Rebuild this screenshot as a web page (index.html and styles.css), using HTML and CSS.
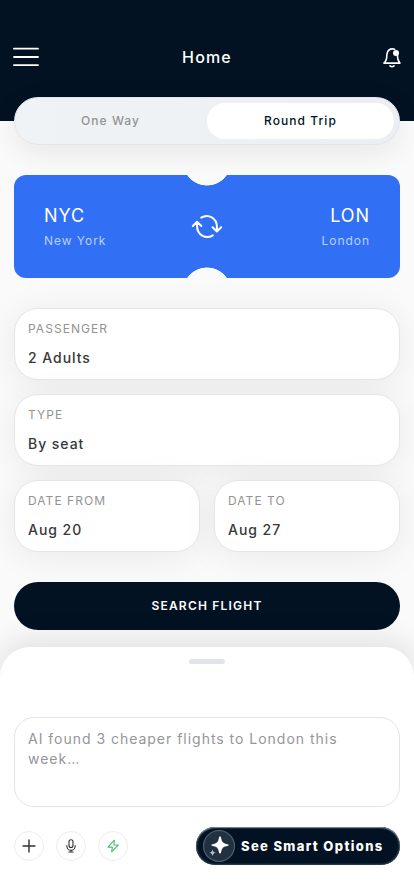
FILE: index.html
```html
<!DOCTYPE html>
<html lang="en">
<head>
<meta charset="utf-8">
<meta name="viewport" content="width=device-width, initial-scale=1">
<title>Home</title>
<link rel="stylesheet" href="styles.css">
</head>
<body>
<div class="app">
  <header class="header">
    <svg class="menu" width="28" height="22" viewBox="0 0 28 22"><path d="M2 2.700h24M2 11h24M2 19.200h24"/></svg>
    <h1 class="title">Home</h1>
    <svg class="bell" width="20" height="22" viewBox="0 0 20 22"><path d="M12.600 3.200C8.400 1.900 5.100 4.300 4.900 8.400L4.700 11.400c-.1 1.600-.5 2.600-1.300 4L2 17.100h16l-1.200-1.900c-.8-1.200-1.100-2.400-1.200-4L15.400 8.400M8 19.800q2 1.700 4 0"/><circle cx="14" cy="7" r="3"/></svg>
  </header>
  <main class="content">
    <div class="tabs">
      <button class="tab">One Way</button>
      <button class="tab tab-active">Round Trip</button>
    </div>
    <section class="ticket">
      <div class="place"><div class="code">NYC</div><div class="city">New York</div></div>
      <svg class="swap" width="32" height="28" viewBox="0 0 32 28"><path d="M10.200 4.600C17.500.2 25.900 5.600 25.900 13.600v4.500M21.600 14.200l4.300 4.300 4.300-4.300M21.800 22.400C14.500 26.800 6.100 21.600 6.100 13.600V9.100M1.800 13l4.300-4.300 4.300 4.300"/></svg>
      <div class="place place-end"><div class="code">LON</div><div class="city">London</div></div>
    </section>
    <section class="fields">
      <div class="field wide"><div class="label">PASSENGER</div><div class="value">2 Adults</div></div>
      <div class="field wide"><div class="label">TYPE</div><div class="value">By seat</div></div>
      <div class="field"><div class="label">DATE FROM</div><div class="value">Aug 20</div></div>
      <div class="field"><div class="label">DATE TO</div><div class="value">Aug 27</div></div>
    </section>
    <button class="search">SEARCH FLIGHT</button>
  </main>
  <section class="sheet">
    <div class="handle"></div>
    <div class="prompt">AI found 3 cheaper flights to London this week…</div>
    <div class="actions">
      <button class="tool" aria-label="Add"><svg width="16" height="16" viewBox="0 0 16 16"><path d="M8 2v12M2 8h12"/></svg></button>
      <button class="tool" aria-label="Speak"><svg class="mic" width="14" height="16" viewBox="0 0 14 16"><rect x="5" y="1.800" width="4" height="7.700" rx="2"/><path d="M2.900 7.500v.7a4.100 4.100 0 0 0 8.200 0v-.7M7 12.500v1.500M4.800 14h4.400"/></svg></button>
      <button class="tool" aria-label="Quick"><svg class="bolt" width="16" height="16" viewBox="0 0 16 16"><path d="M9.400 2.200 3 9.100h4.400l-.8 4.700L13.300 7H8.900z"/></svg></button>
      <button class="smart">
        <span class="spark"><svg width="32" height="32" viewBox="0 0 32 32"><path d="M17 6.300Q17.900 6.300 18.200 8.600 19 13.400 23.200 14 25.800 14.300 25.800 15.100 25.800 15.900 23.200 16.200 19 16.800 18.200 21.400 17.900 23.600 17 23.600 16.100 23.600 15.800 21.400 15 16.800 10.800 16.200 8.200 15.900 8.200 15.100 8.200 14.300 10.800 14 15 13.400 15.800 8.600 16.100 6.300 17 6.300Z"/><path class="small" d="M9.500 19.300Q9.900 22.400 13 22.800 9.900 23.200 9.500 26.300 9.100 23.200 6 22.800 9.100 22.400 9.500 19.300Z"/></svg></span>
        <span class="smart-text">See Smart Options</span>
      </button>
    </div>
  </section>
</div>
</body>
</html>
```
FILE: styles.css
```css
* { box-sizing: border-box; }
body { margin: 0; background: #fff; font-family: Inter, sans-serif; }
button { font: inherit; border: 0; padding: 0; margin: 0; }
svg { display: block; fill: none; stroke-linecap: round; stroke-linejoin: round; }
.app { height: 896px; overflow: hidden; display: flex; flex-direction: column; background: #fafafa; }
.header { flex: none; height: 121px; padding: 46px 12px 0; background: #021222; display: flex; justify-content: space-between; align-items: flex-start; }
.menu { margin-right: -8px; stroke: #fff; stroke-width: 1.8; }
.title { margin: 0; font-size: 16px; line-height: 22px; font-weight: 500; letter-spacing: 1.15px; color: #fff; }
.bell { stroke: #fff; stroke-width: 1.6; }
.bell circle { fill: #fff; stroke: none; }
.content { flex: none; height: 550px; margin-top: -24px; padding: 0 14px; }
.tabs { height: 48px; padding: 5px; border: 1px solid #e1e5e9; border-radius: 24px; display: flex; gap: 6px; background: linear-gradient(90deg, #eff3f6, #ebeef2); box-shadow: 0 8px 30px rgba(0,0,0,.08); }
.tab { flex: 1; padding-bottom: 2px; border-radius: 18px; background: none; color: #919395; font-size: 12px; font-weight: 450; letter-spacing: 1.05px; }
.tab-active { flex: none; width: 187px; background: #fff; color: #021222; }
.ticket { height: 103px; margin-top: 30px; padding: 0 30px; border-radius: 12px; display: flex; align-items: center; justify-content: space-between; color: #fff;
  background: radial-gradient(circle at 50% -13.500px, #fafafa 23.700px, transparent 24.300px), radial-gradient(circle at 50% 116.500px, #fafafa 23.700px, transparent 24.300px), #3170f5; }
.place { width: 90px; }
.place-end { text-align: right; }
.code { padding-top: 1px; font-size: 18px; line-height: 24px; letter-spacing: .9px; }
.city { margin-top: 4px; font-size: 12px; line-height: 18px; letter-spacing: .95px; color: #b8d0fc; }
.swap { stroke: #fff; stroke-width: 2; }
.fields { margin-top: 30px; display: grid; grid-template-columns: 1fr 1fr; gap: 14px; }
.field { height: 72px; padding: 11px 13px; border: 1px solid #e6e6e6; border-radius: 24px; background: #fff; box-shadow: 0 4px 36px rgba(0,0,0,.07); }
.wide { grid-column: 1 / -1; }
.label { font-size: 12px; line-height: 18px; letter-spacing: 1.05px; color: #939393; }
.value { margin-top: 10px; font-size: 14px; line-height: 20px; font-weight: 450; letter-spacing: .95px; color: #383838; }
.search { display: block; width: 100%; height: 48px; margin-top: 30px; padding-bottom: 2px; border-radius: 24px; background: #021222; color: #fff; font-size: 12px; font-weight: 600; letter-spacing: 1.2px; }
.sheet { flex: 1; padding: 12px 14px 0; background: #fff; border-radius: 30px 30px 0 0; box-shadow: 0 -8px 30px rgba(0,0,0,.1); }
.handle { width: 36px; height: 5px; margin: 0 auto; border-radius: 3px; background: #e1e5ea; }
.prompt { height: 90px; margin-top: 53px; padding: 11px 13px; border: 1px solid #e4e4e6; border-radius: 20px; font-size: 14px; line-height: 20px; letter-spacing: .98px; color: #949699; }
.actions { margin-top: 20px; display: flex; align-items: center; gap: 12px; }
.tool { width: 30px; height: 30px; border: 1px solid #ededed; border-radius: 50%; background: #fff; display: flex; align-items: center; justify-content: center; stroke: #303030; stroke-width: 1.4; }
.mic { stroke-width: 1.1; }
.bolt { stroke: #4fbe73; stroke-width: 1.1; }
.smart { width: 204px; height: 38px; margin-left: auto; padding-left: 7px; border-radius: 19px; background: #021222; box-shadow: inset 0 1px 1px #7c8995, inset 0 0 2px 1px #37495a; display: flex; align-items: center; gap: 6px; color: #fff; font-size: 13px; font-weight: 800; letter-spacing: 1.35px; white-space: nowrap; }
.spark { width: 32px; height: 32px; border-radius: 50%; background: #213142; box-shadow: inset 0 0 1px 1px #536475; }
.spark path { fill: #fff; }
.spark .small { fill: #b6c0ca; }
```
